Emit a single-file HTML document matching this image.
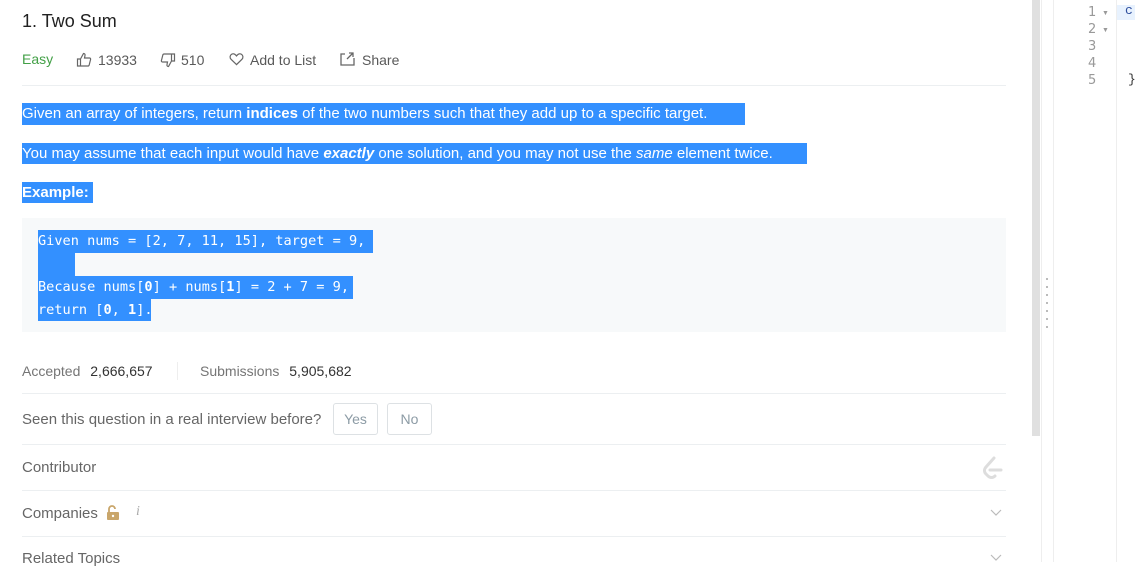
<!DOCTYPE html>
<html><head><meta charset="utf-8"><style>
*{margin:0;padding:0;box-sizing:border-box}
body{width:1135px;height:562px;overflow:hidden;background:#fff;font-family:"Liberation Sans",sans-serif;position:relative;color:#595959}
.a{position:absolute;white-space:nowrap}
.hl{background:#3390ff;color:#fff}
.hr{position:absolute;left:22px;width:984px;height:1px;background:#eceff1}
.mono{font-family:"DejaVu Sans Mono","Liberation Mono",monospace;font-size:13.6px}
.btn{position:absolute;top:403px;height:32px;border:1px solid #dde1e4;border-radius:3px;color:#8c9ba5;font-size:14px;text-align:center;line-height:30px}
</style></head><body>
<div class="a" style="left:22px;top:11px;font-size:18px;color:#212121">1. Two Sum</div>
<div class="a" style="left:22px;top:51px;font-size:14px;color:#43a047">Easy</div>
<svg class="a" style="left:76px;top:52px" width="16" height="16" viewBox="0 0 16 16" fill="none" stroke="#666" stroke-width="1.2"><path d="M1.5 7h3v7h-3zM4.5 7l3-5.5c1.2 0 1.8.8 1.5 2L8.5 6h5c.8 0 1.3.7 1.1 1.4l-1.4 5.5c-.2.7-.7 1.1-1.3 1.1H4.5"/></svg>
<div class="a" style="left:98px;top:52px;font-size:14px">13933</div>
<svg class="a" style="left:160px;top:52px" width="16" height="16" viewBox="0 0 16 16" fill="none" stroke="#666" stroke-width="1.2"><path d="M14.5 9h-3V2h3zM11.5 9l-3 5.5c-1.2 0-1.8-.8-1.5-2L7.5 10h-5c-.8 0-1.3-.7-1.1-1.4l1.4-5.5C3 2.4 3.5 2 4.1 2h7.4"/></svg>
<div class="a" style="left:181px;top:52px;font-size:14px">510</div>
<svg class="a" style="left:229px;top:52px" width="15" height="14" viewBox="0 0 16 15" fill="none" stroke="#666" stroke-width="1.3"><path d="M8 13.5L2.2 7.8C.6 6.2.8 3.7 2.6 2.5c1.5-1 3.5-.6 4.6.8L8 4.2l.8-.9c1.1-1.4 3.1-1.8 4.6-.8 1.8 1.2 2 3.7.4 5.3z"/></svg>
<div class="a" style="left:250px;top:52px;font-size:14px">Add to List</div>
<svg class="a" style="left:340px;top:52px" width="15" height="14" viewBox="0 0 15 14" fill="none" stroke="#666" stroke-width="1.3"><path d="M5 2H1v11h13V6M9 1l4 0 0 4M13 1L7 7"/></svg>
<div class="a" style="left:362px;top:52px;font-size:14px">Share</div>
<div class="hr" style="top:85px"></div>
<div class="a hl" style="left:22px;top:103px;height:22px;width:723px;font-size:15px;line-height:22px">Given an array of integers, return <b>indices</b> of the two numbers such that they add up to a specific target.</div>
<div class="a hl" style="left:22px;top:143px;height:21px;width:785px;font-size:15px;line-height:21px">You may assume that each input would have <b><i>exactly</i></b> one solution, and you may not use the <i>same</i> element twice.</div>
<div class="a hl" style="left:22px;top:182px;height:21px;width:71px;font-size:15px;line-height:21px;font-weight:bold">Example:</div>
<div class="a" style="left:22px;top:218px;width:984px;height:114px;background:#f7f9fa"></div>
<div class="a hl mono" style="left:38px;top:230px;height:23px;width:335px;line-height:23px">Given nums = [2, 7, 11, 15], target = 9,</div>
<div class="a hl" style="left:38px;top:253px;height:23px;width:37px"></div>
<div class="a hl mono" style="left:38px;top:276px;height:23px;width:315px;line-height:23px">Because nums[<b>0</b>] + nums[<b>1</b>] = 2 + 7 = 9,</div>
<div class="a hl mono" style="left:38px;top:299px;height:22px;width:113px;line-height:22px">return [<b>0</b>, <b>1</b>].</div>
<div class="a" style="left:22px;top:363px;font-size:14px;color:#757575">Accepted <span style="color:#333;margin-left:6px">2,666,657</span></div>
<div class="a" style="left:177px;top:362px;width:1px;height:18px;background:#eee"></div>
<div class="a" style="left:200px;top:363px;font-size:14px;color:#757575">Submissions <span style="color:#333;margin-left:6px">5,905,682</span></div>
<div class="hr" style="top:393px"></div>
<div class="a" style="left:22px;top:411px;font-size:15px;color:#666">Seen this question in a real interview before?</div>
<div class="btn" style="left:333px;width:45px">Yes</div>
<div class="btn" style="left:387px;width:45px">No</div>
<div class="hr" style="top:444px"></div>
<div class="a" style="left:22px;top:459px;font-size:15px;color:#666">Contributor</div>
<svg class="a" style="left:980px;top:455px" width="26" height="26" viewBox="0 0 26 26" fill="none" stroke="#ddd" stroke-width="3" stroke-linecap="round"><path d="M14 3L6 12c-2 2.2-2 5 0 7l2 2c2 2 5 2 7 0M10 15h11"/></svg>
<div class="hr" style="top:490px"></div>
<div class="a" style="left:22px;top:505px;font-size:15px;color:#666">Companies</div>
<svg class="a" style="left:106px;top:505px" width="14" height="16" viewBox="0 0 14 16"><path d="M3 7V4a3 3 0 0 1 6 0" fill="none" stroke="#c9a66b" stroke-width="1.8"/><rect x="1" y="7" width="12" height="8" rx="1" fill="#c9a66b"/><circle cx="7" cy="11" r="1.2" fill="#fff"/></svg>
<div class="a" style="left:136px;top:504px;font-size:14px;color:#aaa;font-style:italic;font-family:'Liberation Serif',serif">i</div>
<svg class="a" style="left:990px;top:509px" width="12" height="8" viewBox="0 0 12 8" fill="none" stroke="#bbb" stroke-width="1.2"><path d="M1 1l5 5 5-5"/></svg>
<div class="hr" style="top:536px"></div>
<div class="a" style="left:22px;top:550px;font-size:15px;color:#666">Related Topics</div>
<svg class="a" style="left:990px;top:554px" width="12" height="8" viewBox="0 0 12 8" fill="none" stroke="#bbb" stroke-width="1.2"><path d="M1 1l5 5 5-5"/></svg>
<div class="a" style="left:1032px;top:0;width:8px;height:436px;background:#e0e0e0"></div>
<div class="a" style="left:1041px;top:0;width:1px;height:562px;background:#eee"></div>
<div class="a" style="left:1053px;top:0;width:1px;height:562px;background:#eee"></div>
<div class="a" style="left:1046px;top:278px;width:2px;height:50px;background:repeating-linear-gradient(#bbb 0 2px,transparent 2px 8px)"></div>
<div class="a" style="left:1116px;top:0;width:1px;height:562px;background:#eee"></div>
<div class="a" style="left:1117px;top:5px;width:18px;height:15px;background:#e8f2fe"></div>
<div class="a" style="left:1125px;top:3px;font-size:13px;color:#2f4f9e;font-family:'Liberation Mono',monospace">c</div>
<div class="a" style="left:1088px;top:4px;font-size:13px;line-height:17px;color:#999;font-family:'DejaVu Sans',sans-serif">1<br>2<br>3<br>4<br>5</div>
<div class="a" style="left:1102px;top:5px;font-size:7px;line-height:17px;color:#999">▼<br>▼</div>
<div class="a" style="left:1128px;top:72px;font-size:13px;color:#333;font-family:'Liberation Mono',monospace">}</div>
</body></html>
